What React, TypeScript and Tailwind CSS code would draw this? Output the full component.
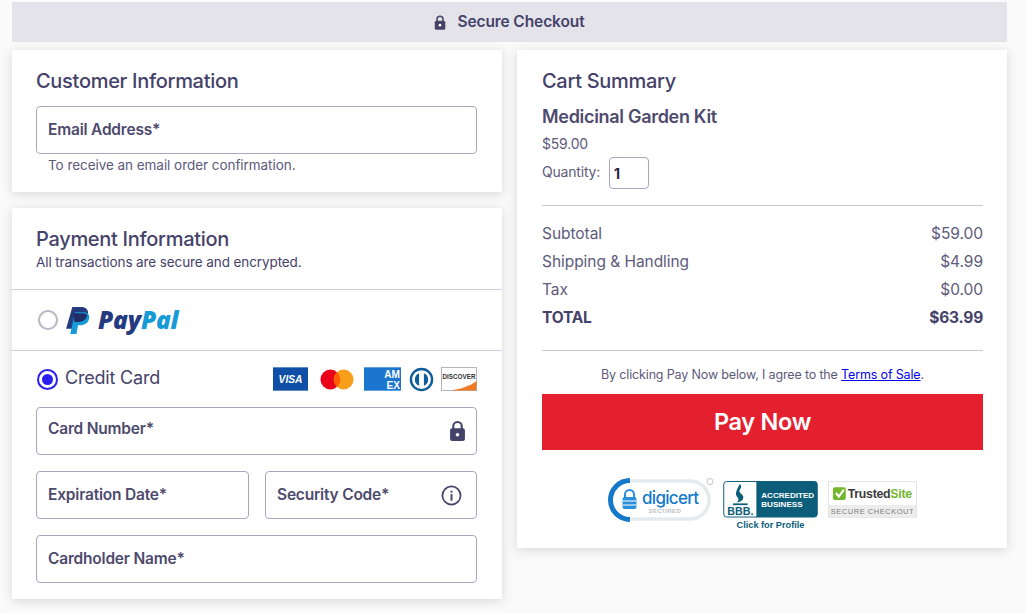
import React from "react";

const F = "font-['Inter','Liberation_Sans',sans-serif]";

function Field({ label, className = "", labelClass = "", children }: { label: string; className?: string; labelClass?: string; children?: React.ReactNode }) {
  return (
    <div className={`flex items-center justify-between h-[48px] border border-[#a9a7bf] rounded-[4px] pl-[11px] pr-[14px] bg-white ${className}`}>
      <span className={`text-[15.500px] font-semibold text-[#4d4a6d] tracking-[-0.2px] ${labelClass}`}>{label}</span>
      {children}
    </div>
  );
}

function Row({ l, r, bold }: { l: string; r: string; bold?: boolean }) {
  return (
    <div className={`flex justify-between h-[28px] items-center text-[15.5px] ${bold ? "font-bold text-[#45426a] tracking-[-0.2px]" : "text-[#5d5a7b] tracking-[-0.05px]"}`}>
      <span>{l}</span>
      <span>{r}</span>
    </div>
  );
}

function Card({ className = "", children }: { className?: string; children: React.ReactNode }) {
  return <section className={`bg-white shadow-[0_2px_10px_rgba(60,60,80,0.18)] ${className}`}>{children}</section>;
}

function Lock({ className = "" }: { className?: string }) {
  return (
    <svg viewBox="0 0 16 20" className={className}>
      <path d="M4 8V5.5a4 4 0 0 1 8 0V8" fill="none" stroke="#45426a" strokeWidth="2" />
      <rect x="1" y="7.5" width="14" height="12" rx="2" fill="#45426a" />
      <circle cx="8" cy="13.5" r="1.7" fill="#fff" />
    </svg>
  );
}

function PayPal() {
  return (
    <div className="flex items-center gap-[8px]">
      <svg viewBox="0 0 24 28" className="w-[25px] h-[29px]">
        <path d="M7 1h8c5 0 8 2.500 7 7-1 5-5 7.500-10 7.500H9L7.500 22H1z" fill="#253b80" />
        <path d="M9.500 6h8c4 0 6.500 2 5.700 6-.9 4.500-4 6.500-8.700 6.500h-2L11 27H5z" fill="#179bd7" />
        <path d="M8.200 7h7.800c2 0 4 .5 5.500 1.500-.8 4.700-4.500 7-9.500 7H9z" fill="#222d65" />
      </svg>
      <span className="text-[24.500px] leading-none font-extrabold italic tracking-[-0.2px] font-['Open_Sans',sans-serif]">
        <span className="text-[#253b80]">Pay</span>
        <span className="text-[#179bd7]">Pal</span>
      </span>
    </div>
  );
}

function CardLogos() {
  return (
    <div className="flex items-center">
      <svg viewBox="0 0 36 24" className="w-[35px] h-[24px]">
        <rect width="36" height="24" fill="#0f4fa8" />
        <text x="18" y="16.500" textAnchor="middle" fontFamily="Liberation Sans" fontWeight="700" fontStyle="italic" fontSize="10.500" fill="#fff">VISA</text>
      </svg>
      <svg viewBox="0 0 36 22" className="w-[34px] h-[21px] ml-[12px]">
        <circle cx="11" cy="11" r="10.500" fill="#eb001b" />
        <circle cx="25" cy="11" r="10.500" fill="#f79e1b" />
        <path d="M18 3.200a10.500 10.500 0 0 1 0 15.600 10.500 10.500 0 0 1 0-15.600z" fill="#ff5f00" />
      </svg>
      <svg viewBox="0 0 38 24" className="w-[37px] h-[24px] ml-[10px]">
        <rect width="38" height="24" fill="#1b76cf" />
        <text x="37" y="10.500" textAnchor="end" fontFamily="Liberation Sans" fontWeight="700" fontSize="10.400" fill="#fff">AM</text>
        <text x="37" y="22.500" textAnchor="end" fontFamily="Liberation Sans" fontWeight="700" fontSize="10.400" fill="#fff">EX</text>
      </svg>
      <svg viewBox="0 0 26 26" className="w-[25px] h-[25px] ml-[8px]">
        <circle cx="13" cy="13" r="11" fill="#fff" stroke="#0f5e9c" strokeWidth="2.500" />
        <path d="M10.500 6.500v13a7 7 0 0 1 0-13z M15.500 6.500a7 7 0 0 1 0 13z" fill="#0f5e9c" />
      </svg>
      <svg viewBox="0 0 36 24" className="w-[36px] h-[24px] ml-[7px]">
        <rect x=".5" y=".5" width="35" height="23" fill="#fff" stroke="#b5b5b5" />
        <path d="M35.500 14v9.500H10C20 22 29 19 35.500 14z" fill="#ee7a23" />
        <text x="18" y="12" textAnchor="middle" fontFamily="Liberation Sans" fontWeight="700" fontSize="6.300" fill="#333">DISCOVER</text>
      </svg>
    </div>
  );
}

function Badges() {
  return (
    <div className="flex items-start justify-center mt-[28px]">
      <svg viewBox="0 0 108 44" className="w-[108px] h-[44px]">
        <rect x="3" y="3" width="98" height="38" rx="19" fill="#fff" stroke="#e5eaee" strokeWidth="3.500" />
        <path d="M22 2.500A19.500 19.500 0 0 0 22 41.500" fill="none" stroke="#1479c9" strokeWidth="5" />
        <path d="M17 20v-3.500a4.500 4.500 0 0 1 9 0V20" fill="none" stroke="#2b8fdc" strokeWidth="2" />
        <rect x="14.500" y="19" width="14" height="12" rx="2" fill="#2b8fdc" />
        <path d="M14.500 23h14M14.500 27h14" stroke="#fff" strokeWidth="1" />
        <text x="34" y="26" fontFamily="Inter" fontSize="17" fontWeight="500" letterSpacing="-.7" fill="#1479c9">digicert</text>
        <text x="57" y="34.500" textAnchor="middle" fontFamily="Liberation Sans" fontSize="6" fontWeight="700" letterSpacing=".5" fill="#b9bec4">SECURED</text>
        <circle cx="102" cy="3.500" r="3" fill="#fff" stroke="#c3c3c3" />
      </svg>
      <div className="ml-[6px] w-[97px]">
        <svg viewBox="0 0 97 38" className="w-[97px] h-[37px] mt-[3px] block">
          <rect x=".5" y=".5" width="96" height="36.500" rx="3" fill="#fff" stroke="#0b5d79" />
          <path d="M34 .5h60a2.500 2.500 0 0 1 2.500 2.500v31.500a2.500 2.500 0 0 1-2.500 2.500H34z" fill="#0b5d79" />
          <path d="M17 3c4 4-2 5.500 0 8.500 1.500 2 5 3.500 3 7.500-1 1.500-2.500 2.500-6.500 3.200 2-1.700 3-3 1-5.500-2.300-3-2-5.700 2.500-13.700z" fill="#0b5d79" />
          <rect x="10" y="23" width="15" height="1.800" fill="#0b5d79" />
          <text x="17.500" y="35" textAnchor="middle" fontFamily="Liberation Sans" fontWeight="700" fontSize="11" fill="#0b5d79">BBB.</text>
          <text x="39" y="17" fontFamily="Liberation Sans" fontSize="8.300" fontWeight="700" fill="#fff">ACCREDITED</text>
          <text x="39" y="27" fontFamily="Liberation Sans" fontSize="8.300" fontWeight="700" fill="#fff">BUSINESS</text>
        </svg>
        <div className="text-center text-[9.200px] font-bold leading-[11px] text-[#0b5d79] font-['Liberation_Sans',sans-serif] mt-[2px]">Click for Profile</div>
      </div>
      <svg viewBox="0 0 90 37" className="w-[89px] h-[37px] ml-[9px] mt-[3px]">
        <rect x=".5" y=".5" width="89" height="36" fill="#fff" stroke="#e3e3e3" />
        <rect x="1" y="24" width="88" height="12.500" fill="#ececec" />
        <rect x="5" y="6" width="13" height="13" rx="2" fill="#74b72e" />
        <path d="M8 12l3 3.500 5-7" fill="none" stroke="#fff" strokeWidth="2.200" />
        <text x="20" y="17" fontFamily="Liberation Sans" fontWeight="700" fontSize="12.500" letterSpacing="-.3">
          <tspan fill="#3c3c3c">Trusted</tspan>
          <tspan fill="#74b72e">Site</tspan>
        </text>
        <text x="45" y="33.500" textAnchor="middle" fontFamily="Liberation Sans" fontSize="7.500" letterSpacing=".6" fill="#7c7c7c">SECURE CHECKOUT</text>
      </svg>
    </div>
  );
}

export default function App() {
  return (
    <div className={`w-[1026px] h-[613px] overflow-hidden bg-[#fafafa] pt-[2px] px-[12px] ${F}`}>
      <header className="w-[995px] h-[40px] bg-[#e3e3e9] flex items-center justify-center gap-[11px] text-[#45426a] text-[15.500px] font-semibold tracking-[-0.1px]">
        <Lock className="w-[12px] h-[15px]" />
        <span>Secure Checkout</span>
      </header>
      <div className="flex gap-[15px] mt-[8px] w-[995px] items-start">
        <div className="w-[490px] flex flex-col gap-[16px]">
          <Card className="h-[142px] pl-[24px] pr-[25px] pt-[18px]">
            <h2 className="text-[20px] leading-[26px] font-medium text-[#45426a] tracking-[-0.3px]">Customer Information</h2>
            <Field label="Email Address*" className="mt-[12px]" />
            <p className="mt-[1px] ml-[12px] text-[13.500px] leading-[20px] text-[#5d5a7b] tracking-[-0.05px]">To receive an email order confirmation.</p>
          </Card>
          <Card className="h-[391px]">
            <div className="h-[82px] px-[24px] pt-[18px] border-b border-[#cfcedb]">
              <h2 className="text-[20px] leading-[26px] font-medium text-[#45426a] tracking-[-0.3px]">Payment Information</h2>
              <p className="mt-[1px] text-[13.500px] leading-[18px] text-[#45426a] tracking-[-0.1px]">All transactions are secure and encrypted.</p>
            </div>
            <div className="h-[61px] px-[26px] flex items-center gap-[7px] border-b border-[#cfcedb]">
              <span className="w-[20px] h-[20px] rounded-full border-2 border-[#b6b5c6]" />
              <PayPal />
            </div>
            <div className="pl-[24px] pr-[25px] pt-[15px]">
              <div className="flex items-center justify-between h-[26px] pl-[1px]">
                <div className="flex items-center gap-[7px]">
                  <span className="w-[21px] h-[21px] rounded-full border-2 border-[#2a1ff0] flex items-center justify-center">
                    <span className="w-[11px] h-[11px] rounded-full bg-[#2a1ff0]" />
                  </span>
                  <span className="text-[18px] leading-[24px] mt-[-2px] text-[#45426a] tracking-[-0.2px]">Credit Card</span>
                </div>
                <CardLogos />
              </div>
              <Field label="Card Number*" labelClass="relative top-[-2px]" className="mt-[15px]">
                <Lock className="w-[17px] h-[22px] mr-[-4px]" />
              </Field>
              <div className="flex gap-[16px] mt-[16px]">
                <Field label="Expiration Date*" className="w-[213px]" />
                <Field label="Security Code*" className="w-[212px]">
                  <svg viewBox="0 0 22 22" className="w-[21px] h-[21px]">
                    <circle cx="11" cy="11" r="9.500" fill="none" stroke="#45426a" strokeWidth="1.800" />
                    <rect x="10" y="9.500" width="2" height="7" fill="#45426a" />
                    <rect x="10" y="6" width="2" height="2" fill="#45426a" />
                  </svg>
                </Field>
              </div>
              <Field label="Cardholder Name*" className="mt-[16px]" />
            </div>
          </Card>
        </div>
        <Card className="w-[490px] h-[498px] pl-[25px] pr-[24px] pt-[18px]">
          <h2 className="text-[20px] leading-[26px] font-medium text-[#45426a] tracking-[-0.3px]">Cart Summary</h2>
          <h3 className="mt-[11px] text-[18px] leading-[24px] font-semibold text-[#4d4a6d] tracking-[-0.3px]">Medicinal Garden Kit</h3>
          <p className="mt-[5px] text-[14px] leading-[20px] text-[#5d5a7b] tracking-[-0.2px]">$59.00</p>
          <div className="flex items-center mt-[3px] gap-[9px]">
            <span className="text-[14px] leading-[20px] mt-[-2px] text-[#5d5a7b] tracking-[-0.2px]">Quantity:</span>
            <span className="w-[40px] h-[32px] border border-[#a9a7bf] rounded-[4px] pl-[4px] flex items-center text-[14px] font-bold text-[#26253c]">1</span>
          </div>
          <div className="mt-[16px] border-t border-[#c9c8d4] pt-[14px] pb-[18px]">
            <Row l="Subtotal" r="$59.00" />
            <Row l="Shipping & Handling" r="$4.99" />
            <Row l="Tax" r="$0.00" />
            <Row l="TOTAL" r="$63.99" bold />
          </div>
          <div className="border-t border-[#c9c8d4] pt-[15px] text-center text-[12.500px] leading-[18px] text-[#5d5a7b] tracking-[-0.15px]">
            By clicking Pay Now below, I agree to the <span className="text-[#0000ee] underline">Terms of Sale</span>.
          </div>
          <div className="mt-[10px] h-[56px] bg-[#e5202e] flex items-center justify-center text-white text-[23.500px] font-semibold tracking-[-0.3px]">Pay Now</div>
          <Badges />
        </Card>
      </div>
    </div>
  );
}
